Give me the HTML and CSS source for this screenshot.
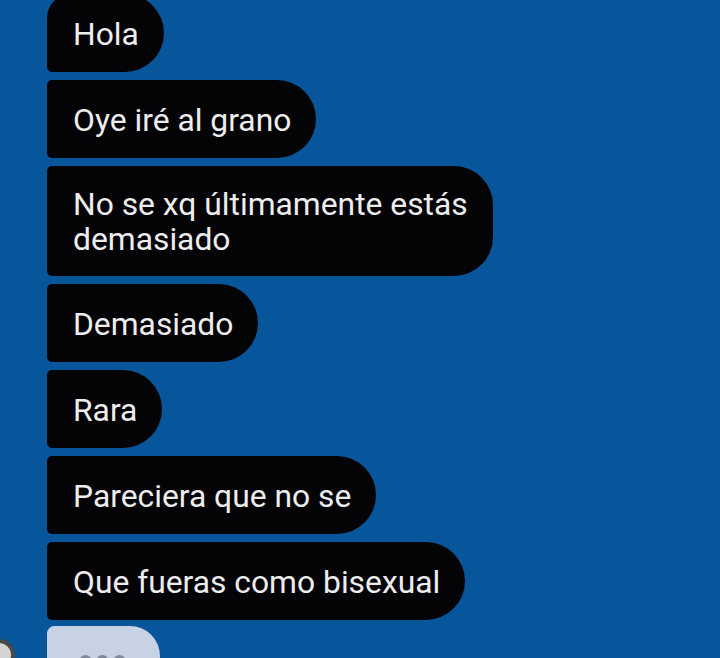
FILE: index.html
```html
<!DOCTYPE html>
<html lang="es">
<head>
<meta charset="utf-8">
<title>Chat</title>
<link rel="stylesheet" href="styles.css">
</head>
<body>
<div class="chat">
  <div class="bubble first">Hola</div>
  <div class="bubble">Oye iré al grano</div>
  <div class="bubble multi">No se xq últimamente estás<br>demasiado</div>
  <div class="bubble">Demasiado</div>
  <div class="bubble">Rara</div>
  <div class="bubble">Pareciera que no se</div>
  <div class="bubble">Que fueras como bisexual</div>
  <div class="typing-row">
    <div class="avatar"></div>
    <div class="typing">
      <span class="dot"></span><span class="dot"></span><span class="dot"></span>
    </div>
  </div>
</div>
</body>
</html>
```
FILE: styles.css
```css
html, body {
  margin: 0;
  padding: 0;
  height: 658px;
  overflow: hidden;
  background: #07559a;
}
.chat {
  display: flex;
  flex-direction: column;
  align-items: flex-start;
  gap: 8px;
  padding-left: 47px;
  margin-top: -6px;
}
.bubble {
  background: #040407;
  color: #ededed;
  font-family: Roboto, "Noto Sans", sans-serif;
  font-size: 31.8px;
  line-height: 34px;
  padding: 23px 25px 21px 26px;
  border-radius: 5px 39px 39px 5px;
}
.bubble.first {
  border-top-left-radius: 24px;
}
.bubble.multi {
  line-height: 35px;
  padding-top: 21px;
  padding-bottom: 19px;
}
.typing-row {
  display: flex;
  align-items: flex-start;
  margin-top: -2px;
}
.avatar {
  width: 32px;
  height: 32px;
  border-radius: 50%;
  background: #d4d4d4;
  border: 4px solid #4a4a4a;
  box-sizing: border-box;
  margin-left: -64px;
  margin-right: 32px;
  margin-top: 13px;
}
.typing {
  width: 113px;
  height: 60px;
  background: #c7d2e4;
  border-radius: 8px 32px 32px 8px;
  display: flex;
  gap: 4px;
  padding-left: 32px;
  padding-top: 29px;
  box-sizing: border-box;
}
.dot {
  width: 13px;
  height: 13px;
  border-radius: 50%;
  background: #7f8897;
}
```
